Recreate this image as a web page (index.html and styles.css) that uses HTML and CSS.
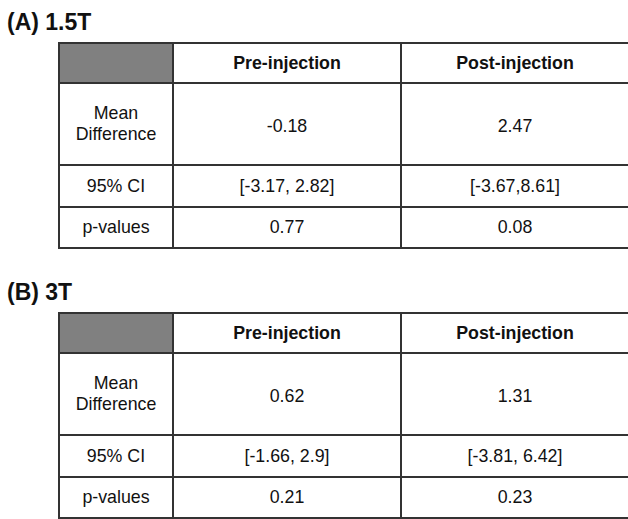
FILE: index.html
```html
<!DOCTYPE html>
<html lang="en">
<head>
<meta charset="utf-8">
<title>Mean difference tables</title>
<link rel="stylesheet" href="styles.css">
</head>
<body>
<main class="figure">
  <section class="panel">
    <h2 class="panel-title">(A) 1.5T</h2>
    <table class="stats">
      <colgroup><col class="c-label"><col class="c-val"><col class="c-val"></colgroup>
      <tr class="r-head"><th class="corner"></th><th>Pre-injection</th><th>Post-injection</th></tr>
      <tr class="r-mean"><td>Mean<br>Difference</td><td class="val">-0.18</td><td class="val">2.47</td></tr>
      <tr class="r-ci"><td>95% CI</td><td>[-3.17, 2.82]</td><td>[-3.67,8.61]</td></tr>
      <tr class="r-p"><td>p-values</td><td>0.77</td><td>0.08</td></tr>
    </table>
  </section>
  <section class="panel">
    <h2 class="panel-title">(B) 3T</h2>
    <table class="stats">
      <colgroup><col class="c-label"><col class="c-val"><col class="c-val"></colgroup>
      <tr class="r-head"><th class="corner"></th><th>Pre-injection</th><th>Post-injection</th></tr>
      <tr class="r-mean"><td>Mean<br>Difference</td><td class="val">0.62</td><td class="val">1.31</td></tr>
      <tr class="r-ci"><td>95% CI</td><td>[-1.66, 2.9]</td><td>[-3.81, 6.42]</td></tr>
      <tr class="r-p"><td>p-values</td><td>0.21</td><td>0.23</td></tr>
    </table>
  </section>
</main>
</body>
</html>
```
FILE: styles.css
```css
html, body {
  margin: 0;
  padding: 0;
  background: #fff;
}
body {
  font-family: "Liberation Sans", Arial, sans-serif;
  color: #111;
}
.figure {
  display: flex;
  flex-direction: column;
  gap: 30px;
  padding-top: 9px;
}
.panel-title {
  margin: 0 0 7px 0;
  padding-left: 7px;
  font-size: 23px;
  line-height: 26px;
  font-weight: bold;
  color: #111;
}
.stats {
  margin-left: 58px;
  width: 569px;
  table-layout: fixed;
  border-collapse: collapse;
  font-size: 17.8px;
  line-height: 21px;
}
.c-label { width: 114px; }
.c-val { width: 228px; }
.stats th, .stats td {
  border: 2px solid #333;
  text-align: center;
  vertical-align: middle;
  padding: 0;
}
.stats th {
  font-weight: bold;
}
.stats th.corner {
  background: #808080;
}
.r-head { height: 40px; }
.r-mean { height: 82px; }
.r-ci { height: 42px; }
.r-p { height: 41px; }
.r-mean .val { padding-top: 4px; }
```
